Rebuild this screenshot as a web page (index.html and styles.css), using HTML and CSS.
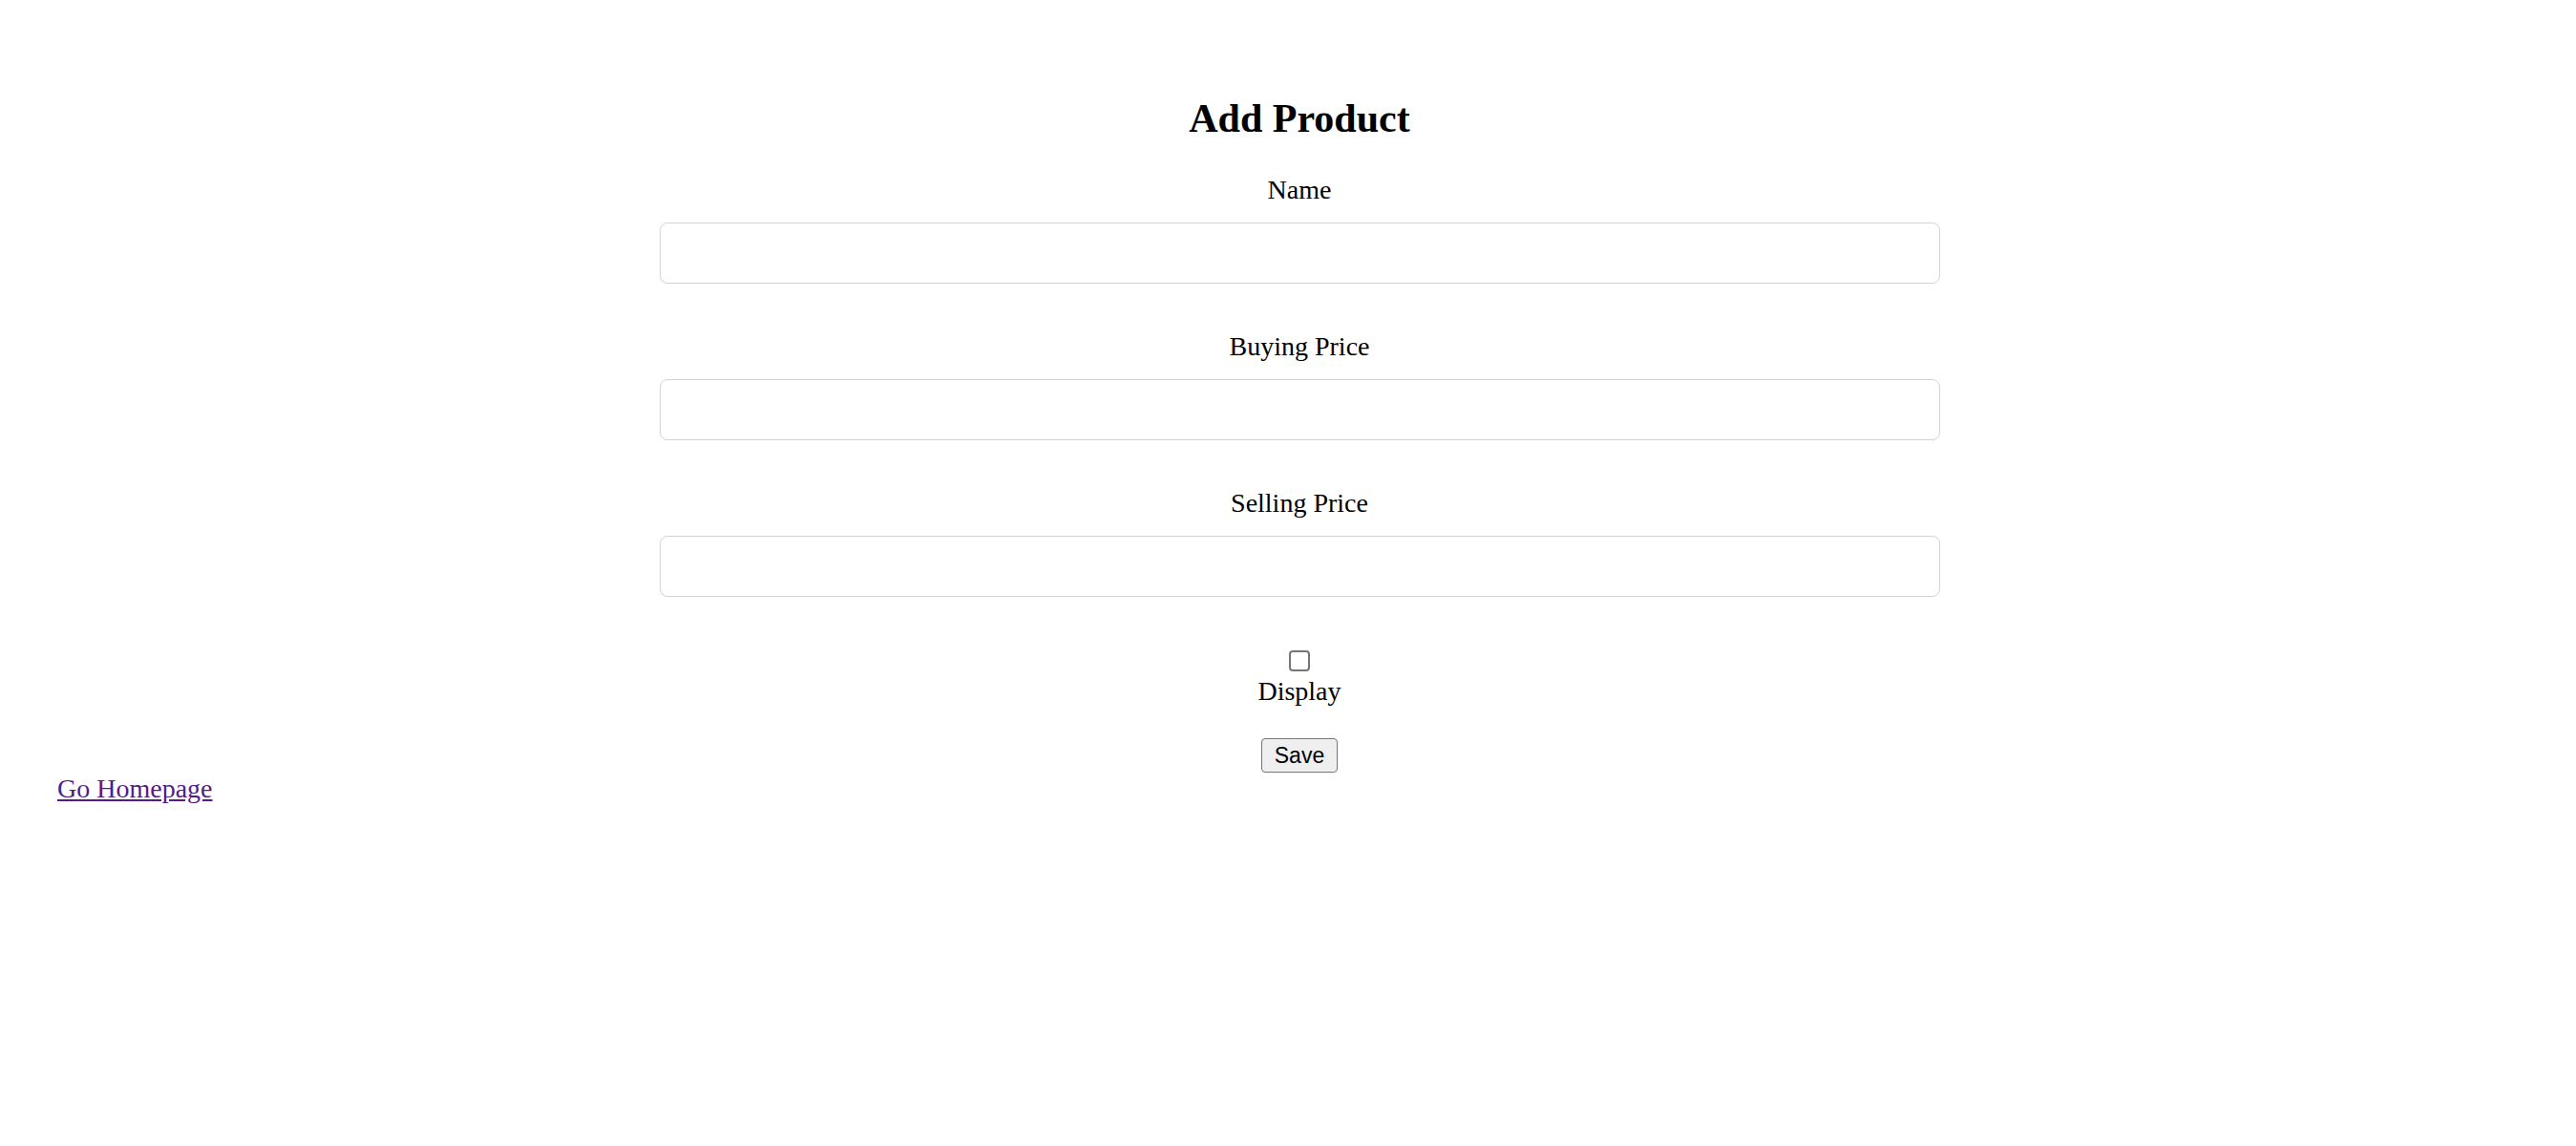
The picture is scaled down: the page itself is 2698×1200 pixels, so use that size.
FILE: index.html
```html
<!DOCTYPE html>
<html>
<head>
<meta charset="utf-8">
<title>Add Product</title>
<link rel="stylesheet" href="styles.css">
</head>
<body>
<div class="form-wrap">
  <h2 class="title">Add Product</h2>
  <form class="product-form">
    <div class="field">
      <label class="field-label" for="name">Name</label>
      <input class="field-input" id="name" type="text">
    </div>
    <div class="field">
      <label class="field-label" for="buying">Buying Price</label>
      <input class="field-input" id="buying" type="text">
    </div>
    <div class="field">
      <label class="field-label" for="selling">Selling Price</label>
      <input class="field-input" id="selling" type="text">
    </div>
    <div class="check-field">
      <input class="check" id="display" type="checkbox">
      <label class="field-label" for="display">Display</label>
    </div>
    <button class="save-btn" type="button">Save</button>
  </form>
</div>
<a class="home-link" href="#">Go Homepage</a>
</body>
</html>
```

FILE: styles.css
```css
html, body {
  margin: 0;
  padding: 0;
  background: #ffffff;
}

body {
  font-family: "Liberation Serif", "Times New Roman", serif;
  color: #000000;
}

.form-wrap {
  margin-left: 24px;
  padding-top: 100px;
  text-align: center;
}

.title {
  margin: 0 0 35px 0;
  font-size: 42px;
  line-height: 48px;
  font-weight: bold;
}

.product-form {
  display: flex;
  flex-direction: column;
  align-items: center;
}

.field {
  display: flex;
  flex-direction: column;
  align-items: center;
  margin-bottom: 50px;
}

.field-label {
  display: block;
  font-size: 28px;
  line-height: 32px;
}

.field-input {
  box-sizing: border-box;
  margin-top: 18px;
  width: 1341px;
  height: 64px;
  border: 1px solid #d3d3d3;
  border-radius: 8px;
  background: #ffffff;
  font-size: 24px;
  padding: 0 16px;
  outline: none;
}

.check-field {
  display: flex;
  flex-direction: column;
  align-items: center;
  margin-top: 6px;
}

.check {
  appearance: none;
  -webkit-appearance: none;
  box-sizing: border-box;
  width: 22px;
  height: 22px;
  margin: 0 0 5px 0;
  border: 2px solid #767676;
  border-radius: 4px;
  background: #ffffff;
}

.save-btn {
  box-sizing: border-box;
  margin-top: 33px;
  width: 80px;
  height: 36px;
  padding: 0;
  border: 1px solid #767676;
  border-radius: 4px;
  background: #efefef;
  font-family: "Liberation Sans", Arial, sans-serif;
  font-size: 23px;
  color: #000000;
}

.home-link {
  display: inline-block;
  margin-left: 60px;
  margin-top: 1px;
  font-size: 28px;
  line-height: 32px;
  color: #551a8b;
  text-decoration: underline;
}
```
